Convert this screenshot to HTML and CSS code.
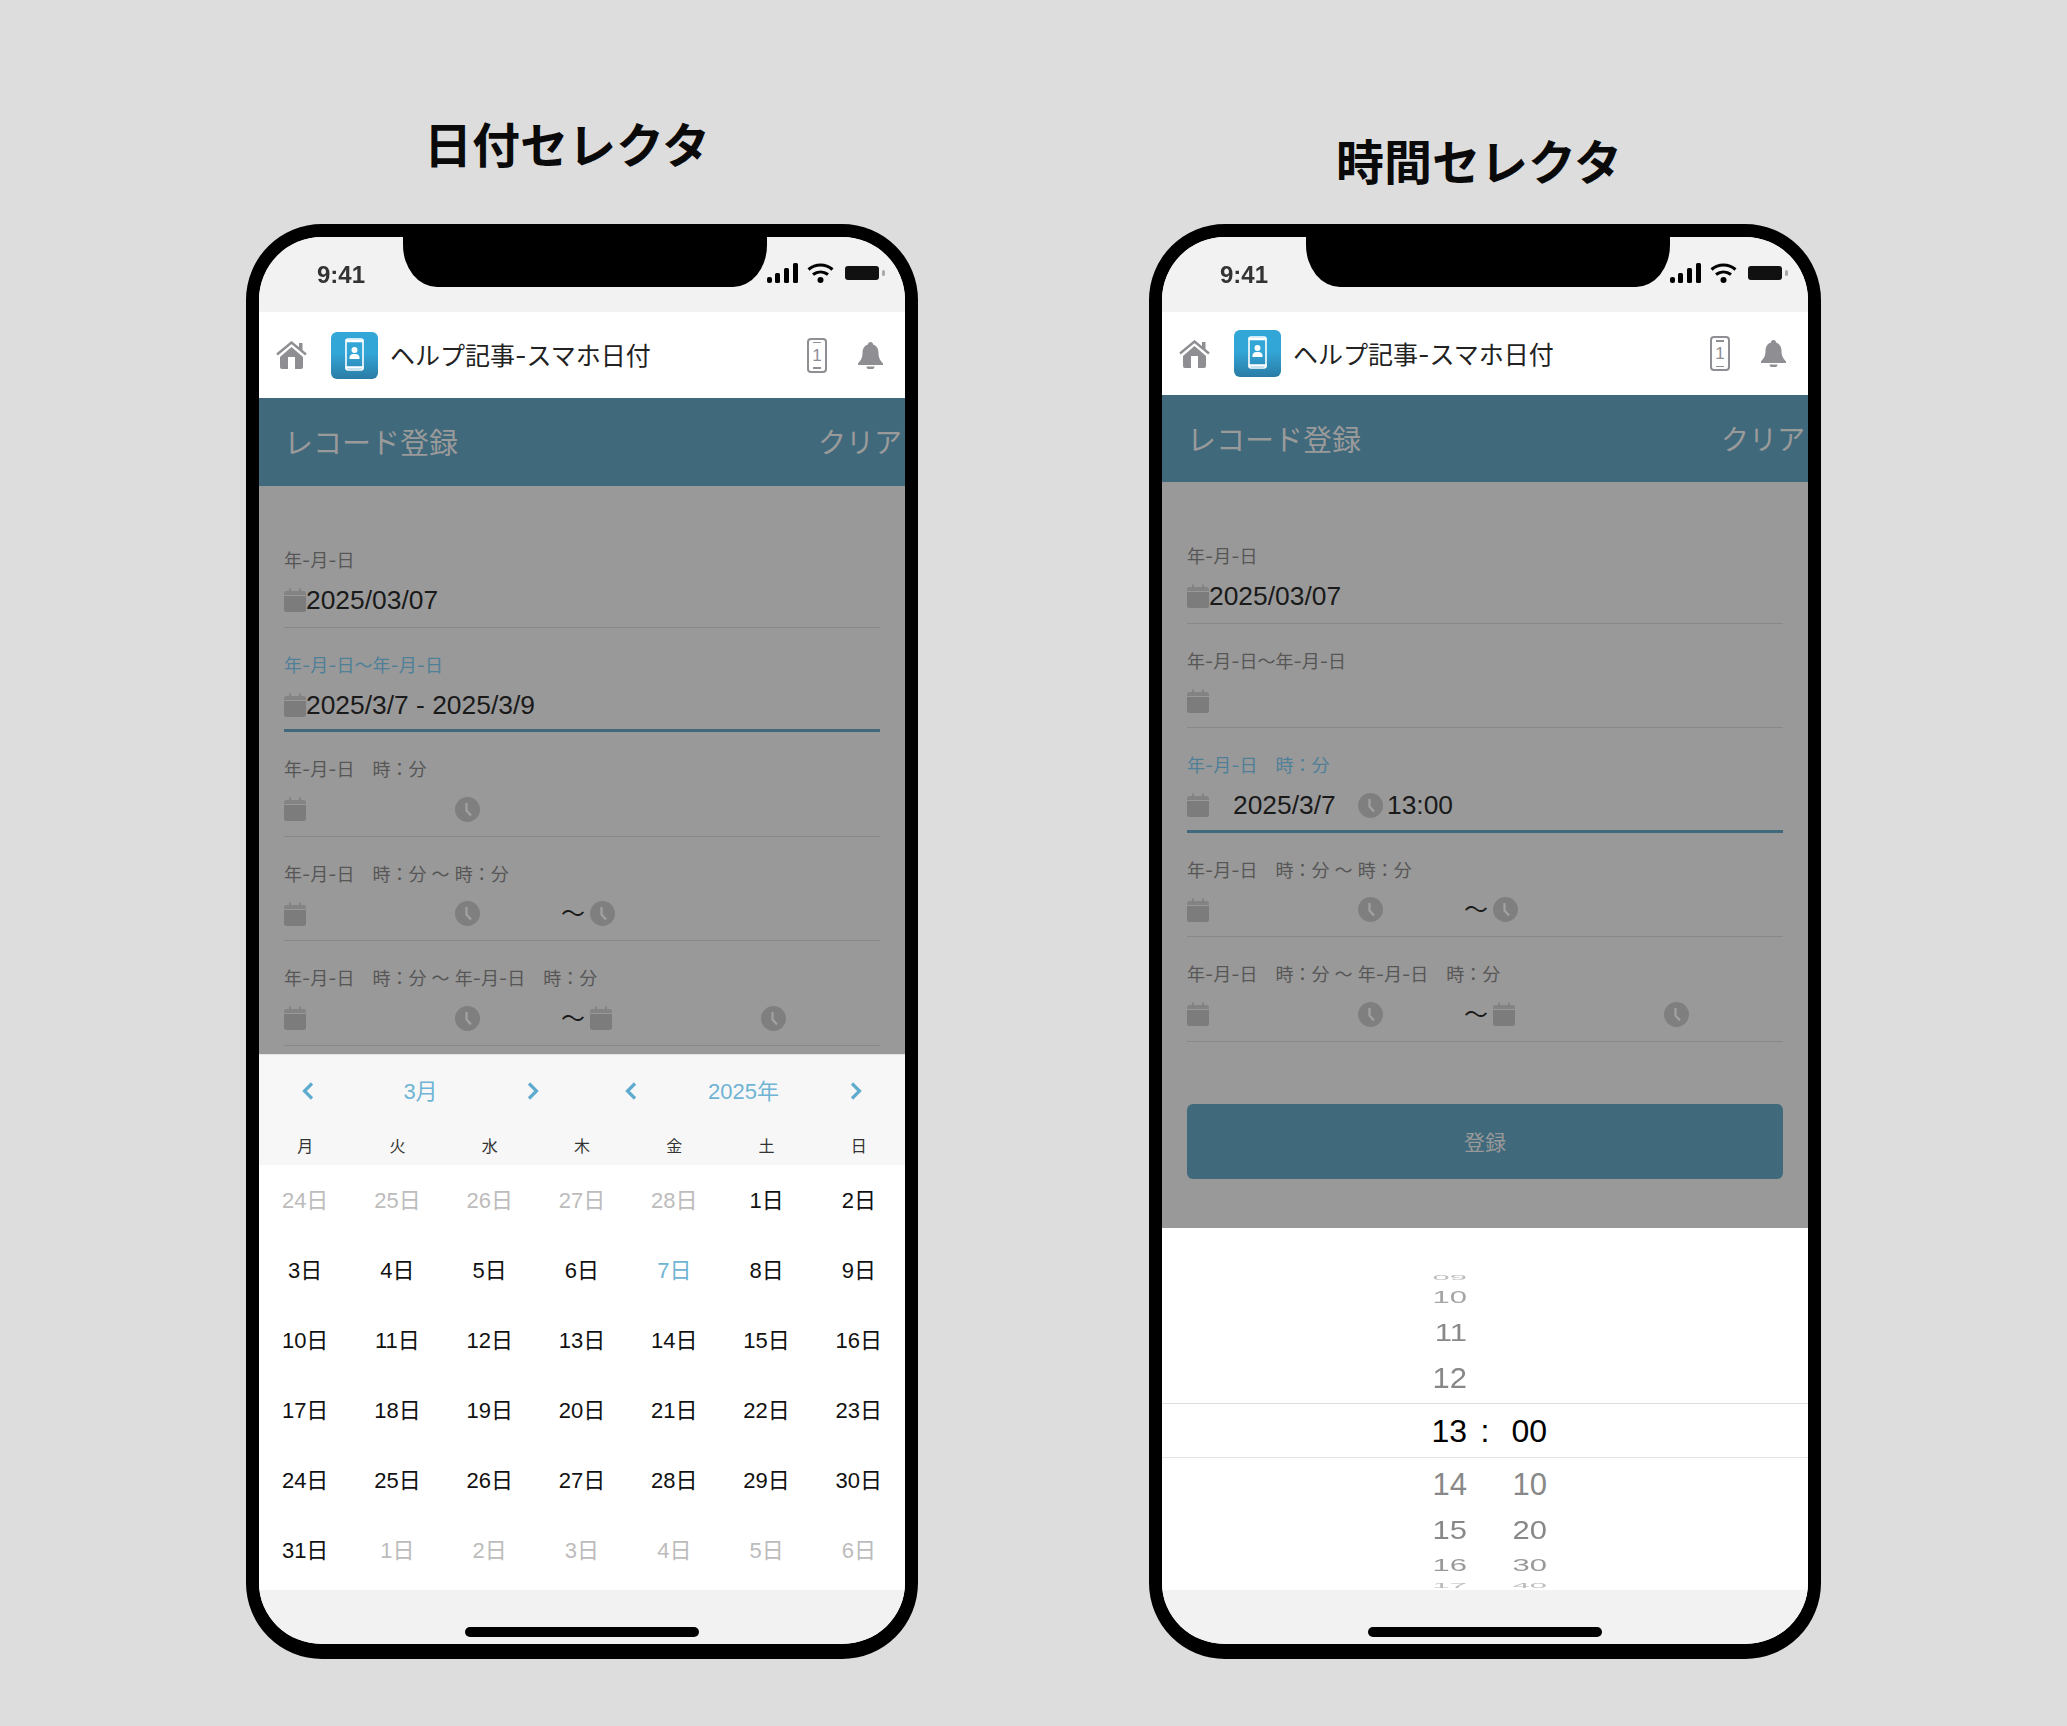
FILE: index.html
```html
<!DOCTYPE html>
<html lang="ja">
<head>
<meta charset="utf-8">
<title>日付セレクタ / 時間セレクタ</title>
<link rel="stylesheet" href="styles.css">
</head>
<body>
<svg class="defs" width="0" height="0" aria-hidden="true">
  <symbol id="i-cal" viewBox="0 0 22 24">
    <path d="M2.5 3H5V0.5h2V3h8V0.5h2V3h2.5A2.5 2.5 0 0 1 22 5.500V7H0V5.500A2.500 2.500 0 0 1 2.500 3z" fill="#838383"/>
    <path d="M0 8h22v13.500a2.500 2.500 0 0 1-2.500 2.500h-17A2.500 2.500 0 0 1 0 21.500z" fill="#7c7c7c"/>
  </symbol>
  <symbol id="i-clock" viewBox="0 0 25 25">
    <circle cx="12.500" cy="12.500" r="12.500" fill="#7f7f7f"/>
    <path d="M11.500 6v7.500l4.500 5" fill="none" stroke="#a2a2a2" stroke-width="2.200"/>
  </symbol>
  <symbol id="i-home" viewBox="0 0 31 28">
    <path d="M1 13.500 15.500 1.500 30 13.500" fill="none" stroke="#8e8e93" stroke-width="2.400"/>
    <path d="M23 2h3.500v7H23z" fill="#8e8e93"/>
    <path d="M4 16 15.500 6 27 16v10a2 2 0 0 1-2 2H6a2 2 0 0 1-2-2z" fill="#8e8e93"/>
    <path d="M12 16h7v12h-7z" fill="#fff"/>
  </symbol>
  <symbol id="i-app" viewBox="0 0 47 47">
    <defs><linearGradient id="appfill" x1="0" y1="0" x2="0" y2="1"><stop offset="0.45" stop-color="#33a6d8"/><stop offset="1" stop-color="#2a7ca5"/></linearGradient></defs>
    <rect width="47" height="47" rx="6" fill="url(#appfill)"/>
    <rect x="15" y="7" width="17" height="31" rx="2" fill="none" stroke="#fff" stroke-width="1.600"/>
    <path d="M14.500 9h18M14.500 35.500h18" stroke="#fff" stroke-width="2.400"/>
    <circle cx="23.500" cy="18" r="3" fill="#fff"/>
    <path d="M18.500 27v-2a4 4 0 0 1 4-3h2a4 4 0 0 1 4 3v2z" fill="#fff"/>
  </symbol>
  <symbol id="i-bell" viewBox="0 0 25 27">
    <path d="M12.500 0a2.500 2.500 0 0 1 2.500 2.500C19 3.800 20.500 7 20.500 11c0 5 1.500 7 4.500 10.500V23H0v-1.500C3 18 4.500 16 4.500 11c0-4 1.500-7.200 5.500-8.500A2.500 2.500 0 0 1 12.500 0z" fill="#8e8e93"/>
    <path d="M8.500 24.500h8a4 3 0 0 1-8 0z" fill="#8e8e93"/>
  </symbol>
  <symbol id="i-prev" viewBox="0 0 12 18">
    <path d="M10 1.500 2.500 9l7.500 7.500" fill="none" stroke="#5fabcf" stroke-width="3.200"/>
  </symbol>
  <symbol id="i-next" viewBox="0 0 12 18">
    <path d="M2 1.500 9.500 9 2 16.500" fill="none" stroke="#5fabcf" stroke-width="3.200"/>
  </symbol>
  <symbol id="i-signal" viewBox="0 0 31 20">
    <rect x="0" y="14" width="5" height="6" rx="2"/><rect x="8" y="10" width="5" height="10" rx="1.500"/><rect x="17" y="5" width="5" height="15" rx="1.500"/><rect x="26" y="0" width="5" height="20" rx="1.500"/>
  </symbol>
  <symbol id="i-wifi" viewBox="0 0 27 20">
    <path d="M1.500 6.500c7-6 17-6 24 0M6 11.500c4.500-3.500 10.500-3.500 15 0" fill="none" stroke="#000" stroke-width="3"/>
    <circle cx="13.500" cy="17" r="3"/>
  </symbol>
  <symbol id="i-battery" viewBox="0 0 41 14">
    <rect x="0" y="0" width="34" height="14" rx="3" fill="#111"/>
    <rect x="37" y="4" width="3" height="6" rx="1.500" fill="#aaa"/>
  </symbol>
</svg>

<main class="stage">
  <section class="col">
    <h1 class="title title--date">日付セレクタ</h1>
    <div class="phone">
      <div class="notch"></div>
      <div class="status">
        <span class="clock-text">9:41</span>
        <span class="status-icons">
          <svg class="s-signal"><use href="#i-signal"/></svg>
          <svg class="s-wifi"><use href="#i-wifi"/></svg>
          <svg class="s-battery"><use href="#i-battery"/></svg>
        </span>
      </div>
      <header class="app-head">
        <svg class="home"><use href="#i-home"/></svg>
        <svg class="app-icon"><use href="#i-app"/></svg>
        <span class="app-name">ヘルプ記事-スマホ日付</span>
        <span class="device"><span class="device-num">1</span></span>
        <svg class="bell"><use href="#i-bell"/></svg>
      </header>
      <div class="bar">
        <span>レコード登録</span>
        <span class="bar-clear">クリア</span>
      </div>
      <form class="form form--date">
        <div class="field">
          <div class="label">年-月-日</div>
          <div class="value"><svg class="cal"><use href="#i-cal"/></svg><span class="val">2025/03/07</span></div>
        </div>
        <div class="field field--on">
          <div class="label">年-月-日〜年-月-日</div>
          <div class="value"><svg class="cal"><use href="#i-cal"/></svg><span class="val">2025/3/7 - 2025/3/9</span></div>
        </div>
        <div class="field">
          <div class="label">年-月-日　時：分</div>
          <div class="value picks"><svg class="cal"><use href="#i-cal"/></svg><svg class="clk"><use href="#i-clock"/></svg></div>
        </div>
        <div class="field">
          <div class="label">年-月-日　時：分 〜 時：分</div>
          <div class="value picks"><svg class="cal"><use href="#i-cal"/></svg><svg class="clk"><use href="#i-clock"/></svg><span class="tilde">〜</span><svg class="clk"><use href="#i-clock"/></svg></div>
        </div>
        <div class="field">
          <div class="label">年-月-日　時：分 〜 年-月-日　時：分</div>
          <div class="value picks"><svg class="cal"><use href="#i-cal"/></svg><svg class="clk"><use href="#i-clock"/></svg><span class="tilde">〜</span><svg class="cal"><use href="#i-cal"/></svg><svg class="clk"><use href="#i-clock"/></svg></div>
        </div>
      </form>
      <div class="calendar">
        <div class="cal-top">
          <div class="cal-nav">
            <div class="nav-group"><svg class="chev"><use href="#i-prev"/></svg><span class="nav-text">3月</span><svg class="chev"><use href="#i-next"/></svg></div>
            <div class="nav-group"><svg class="chev"><use href="#i-prev"/></svg><span class="nav-text">2025年</span><svg class="chev"><use href="#i-next"/></svg></div>
          </div>
          <div class="week">
            <span>月</span><span>火</span><span>水</span><span>木</span><span>金</span><span>土</span><span>日</span>
          </div>
        </div>
        <div class="days">
          <span class="off">24日</span><span class="off">25日</span><span class="off">26日</span><span class="off">27日</span><span class="off">28日</span><span>1日</span><span>2日</span>
          <span>3日</span><span>4日</span><span>5日</span><span>6日</span><span class="sel">7日</span><span>8日</span><span>9日</span>
          <span>10日</span><span>11日</span><span>12日</span><span>13日</span><span>14日</span><span>15日</span><span>16日</span>
          <span>17日</span><span>18日</span><span>19日</span><span>20日</span><span>21日</span><span>22日</span><span>23日</span>
          <span>24日</span><span>25日</span><span>26日</span><span>27日</span><span>28日</span><span>29日</span><span>30日</span>
          <span>31日</span><span class="off">1日</span><span class="off">2日</span><span class="off">3日</span><span class="off">4日</span><span class="off">5日</span><span class="off">6日</span>
        </div>
      </div>
      <div class="foot"><span class="home-bar"></span></div>
    </div>
  </section>

  <section class="col">
    <h1 class="title title--time">時間セレクタ</h1>
    <div class="phone phone--time">
      <div class="notch"></div>
      <div class="status">
        <span class="clock-text">9:41</span>
        <span class="status-icons">
          <svg class="s-signal"><use href="#i-signal"/></svg>
          <svg class="s-wifi"><use href="#i-wifi"/></svg>
          <svg class="s-battery"><use href="#i-battery"/></svg>
        </span>
      </div>
      <header class="app-head">
        <svg class="home"><use href="#i-home"/></svg>
        <svg class="app-icon"><use href="#i-app"/></svg>
        <span class="app-name">ヘルプ記事-スマホ日付</span>
        <span class="device"><span class="device-num">1</span></span>
        <svg class="bell"><use href="#i-bell"/></svg>
      </header>
      <div class="bar">
        <span>レコード登録</span>
        <span class="bar-clear">クリア</span>
      </div>
      <form class="form form--time">
        <div class="field">
          <div class="label">年-月-日</div>
          <div class="value"><svg class="cal"><use href="#i-cal"/></svg><span class="val">2025/03/07</span></div>
        </div>
        <div class="field">
          <div class="label">年-月-日〜年-月-日</div>
          <div class="value"><svg class="cal"><use href="#i-cal"/></svg></div>
        </div>
        <div class="field field--on">
          <div class="label">年-月-日　時：分</div>
          <div class="value picks"><span class="date-slot"><svg class="cal"><use href="#i-cal"/></svg><span class="val">2025/3/7</span></span><span class="time-slot"><svg class="clk"><use href="#i-clock"/></svg><span class="val val--time">13:00</span></span></div>
        </div>
        <div class="field">
          <div class="label">年-月-日　時：分 〜 時：分</div>
          <div class="value picks"><svg class="cal"><use href="#i-cal"/></svg><svg class="clk"><use href="#i-clock"/></svg><span class="tilde">〜</span><svg class="clk"><use href="#i-clock"/></svg></div>
        </div>
        <div class="field">
          <div class="label">年-月-日　時：分 〜 年-月-日　時：分</div>
          <div class="value picks"><svg class="cal"><use href="#i-cal"/></svg><svg class="clk"><use href="#i-clock"/></svg><span class="tilde">〜</span><svg class="cal"><use href="#i-cal"/></svg><svg class="clk"><use href="#i-clock"/></svg></div>
        </div>
        <div class="submit">登録</div>
      </form>
      <div class="wheel">
        <div class="w-row w-09"><span>09</span></div>
        <div class="w-row w-10"><span>10</span></div>
        <div class="w-row w-11"><span>11</span></div>
        <div class="w-row w-12"><span>12</span></div>
        <div class="w-row w-sel"><span>13</span><b>:</b><span>00</span></div>
        <div class="w-row w-14"><span>14</span><i></i><span>10</span></div>
        <div class="w-row w-15"><span>15</span><i></i><span>20</span></div>
        <div class="w-row w-16"><span>16</span><i></i><span>30</span></div>
        <div class="w-row w-17"><span>17</span><i></i><span>40</span></div>
      </div>
      <div class="foot"><span class="home-bar"></span></div>
    </div>
  </section>
</main>
</body>
</html>
```
FILE: styles.css
```css
* { box-sizing: border-box; }
html, body { margin: 0; padding: 0; }
body {
  height: 1726px;
  overflow: hidden;
  background: #dddddd;
  font-family: "Liberation Sans", "Noto Sans CJK JP", sans-serif;
  color: #111;
}
.defs { position: absolute; }
svg { display: block; flex: none; }

.stage { display: flex; gap: 231px; padding: 112px 0 0 246px; }
.col { width: 672px; display: flex; flex-direction: column; }
.title {
  margin: 0;
  height: 60px;
  font-family: "Noto Sans CJK JP", sans-serif;
  font-size: 48px;
  font-weight: 700;
  line-height: 60px;
  text-align: center;
  color: #0a0a0a;
}
.title--date { padding-right: 30px; margin-bottom: 52px; }
.title--time { padding-right: 12px; margin-top: 17px; margin-bottom: 35px; }

.phone {
  position: relative;
  width: 672px;
  height: 1435px;
  display: flex;
  flex-direction: column;
  border: solid #000;
  border-width: 13px 13px 15px;
  border-radius: 76px;
  background: #f2f2f2;
  overflow: hidden;
}
.notch {
  position: absolute;
  top: 0;
  left: 144px;
  width: 364px;
  height: 50px;
  background: #000;
  border-radius: 0 0 34px 34px / 0 0 42px 42px;
}
.status {
  height: 75px;
  flex: none;
  display: flex;
  align-items: center;
  justify-content: space-between;
  padding: 0 19px 0 58px;
  background: #f2f2f2;
}
.clock-text { font-size: 24px; font-weight: 700; color: #333; filter: blur(0.6px); }
.status-icons { display: flex; align-items: center; padding-bottom: 4px; }
.s-signal { width: 31px; height: 20px; margin-right: 9px; filter: blur(0.5px); }
.s-wifi { width: 27px; height: 20px; margin-right: 11px; filter: blur(0.5px); }
.s-battery { width: 41px; height: 14px; filter: blur(0.7px); }

.app-head {
  height: 86px;
  flex: none;
  display: flex;
  align-items: center;
  padding: 0 22px 0 17px;
  background: #fff;
}
.phone--time .app-head { height: 83px; }
.home { width: 31px; height: 28px; margin-right: 24px; }
.app-icon { width: 47px; height: 47px; margin-right: 12px; }
.app-name {
  flex: 1;
  padding-bottom: 2px;
  font-family: Inter, "Noto Sans CJK JP", sans-serif;
  font-size: 25px;
  color: #222;
}
.device {
  position: relative;
  width: 20px;
  height: 35px;
  margin-right: 31px;
  display: flex;
  align-items: center;
  justify-content: center;
  border: 2px solid #8e8e93;
  border-radius: 4px;
  font-size: 17px;
  color: #8e8e93;
}
.device::before, .device::after {
  content: "";
  position: absolute;
  left: 4px;
  width: 8px;
  height: 1.500px;
  background: #8e8e93;
}
.device::before { top: 2px; }
.device::after { bottom: 2px; }
.device-num { line-height: 1; }
.bell { width: 25px; height: 27px; }

.bar {
  height: 88px;
  flex: none;
  display: flex;
  align-items: center;
  justify-content: space-between;
  padding: 0 3px 2px 25px;
  background: #40697b;
  color: #9a9a9a;
  font-size: 29px;
}
.phone--time .bar { height: 87px; }
.bar-clear { font-size: 28px; }

.form { flex: none; padding: 37px 25px 0; background: #999; overflow: hidden; }
.form--date { height: 568px; }
.form--time { height: 746px; }
.field { height: 104.600px; padding-top: 26px; border-bottom: 1px solid #888; }
.field--on { border-bottom: 3.500px solid #40697b; }
.label {
  height: 24px;
  font-family: Inter, "Noto Sans CJK JP", sans-serif;
  font-size: 18px;
  line-height: 24px;
  color: #565656;
  white-space: pre;
}
.field--on .label { color: #4f8098; }
.value { height: 40px; margin-top: 7px; display: flex; align-items: center; }
.picks { display: grid; grid-template-columns: 171px 106px 29px 171px 1fr; }
.cal { width: 22px; height: 24px; }
.clk { width: 25px; height: 25px; }
.val { font-size: 26.400px; color: #1a1a1a; padding-top: 1px; white-space: nowrap; }
.tilde { font-size: 24px; line-height: 1; color: #1a1a1a; padding-bottom: 3px; font-family: "Noto Sans CJK JP", sans-serif; }
.date-slot, .time-slot { display: flex; align-items: center; }
.date-slot .val { margin-left: 24px; }
.time-slot { grid-column: 2 / span 2; }
.val--time { margin-left: 4px; }
.submit {
  height: 75px;
  margin-top: 62px;
  display: flex;
  align-items: center;
  justify-content: center;
  border-radius: 6px;
  background: #40697b;
  color: #999;
  font-size: 21px;
}

.calendar { height: 536px; flex: none; background: #fff; }
.cal-top { height: 111px; padding-top: 1px; background: #f7f7f7; border-top: 1px solid #e4e4e4; }
.cal-nav { display: flex; height: 70px; }
.nav-group {
  width: 323px;
  display: flex;
  align-items: center;
  justify-content: space-between;
  padding: 0 43px;
  color: #6fb4d4;
  font-size: 22px;
}
.nav-text { padding-bottom: 5px; }
.chev { width: 12px; height: 18px; }
.week {
  display: grid;
  grid-template-columns: repeat(7, 1fr);
  margin-top: 7px;
  font-family: "Noto Sans CJK JP", sans-serif;
  font-size: 16px;
  line-height: 24px;
  text-align: center;
  color: #333;
}
.days { display: grid; grid-template-columns: repeat(7, 1fr); grid-auto-rows: 70px; font-size: 22px; text-align: center; }
.days span { display: flex; align-items: center; justify-content: center; padding-bottom: 5px; color: #111; }
.days .off { color: #bcbcbc; }
.days .sel { color: #6fb4d4; }

.wheel { height: 362px; flex: none; padding-top: 43px; background: #fff; overflow: hidden; }
.w-row {
  display: grid;
  grid-template-columns: 305px 36px 44px 1fr;
  grid-template-rows: minmax(0, 1fr);
  align-items: center;
  justify-items: end;
  font-size: 31px;
  line-height: 1;
  color: #888;
}
.w-row span { display: block; }
.w-row b { font-weight: 400; justify-self: center; }
.w-row i { display: block; }
.w-09 { height: 12px; color: #bbb; }
.w-09 span { transform: scaleY(.22); }
.w-10 { height: 28px; color: #a5a5a5; }
.w-10 span { transform: scaleY(.52); }
.w-11 { height: 42px; }
.w-11 span { transform: scaleY(.8); }
.w-12 { height: 50px; }
.w-12 span { transform: scaleY(.95); }
.w-sel { height: 55px; color: #000; border-top: 1px solid #ddd; border-bottom: 1px solid #e4e4e4; font-size: 32px; }
.w-14 { height: 52px; }
.w-15 { height: 40px; }
.w-15 span { transform: scaleY(.83); }
.w-16 { height: 30px; color: #999; }
.w-16 span { transform: scaleY(.52); }
.w-17 { height: 10px; color: #bbb; }
.w-17 span { transform: scaleY(.22); }

.foot {
  height: 54px;
  flex: none;
  position: relative;
  background: #f2f2f2;
}
.home-bar {
  position: absolute;
  left: 206px;
  top: 37px;
  width: 234px;
  height: 10px;
  border-radius: 5px;
  background: #000;
}
```
